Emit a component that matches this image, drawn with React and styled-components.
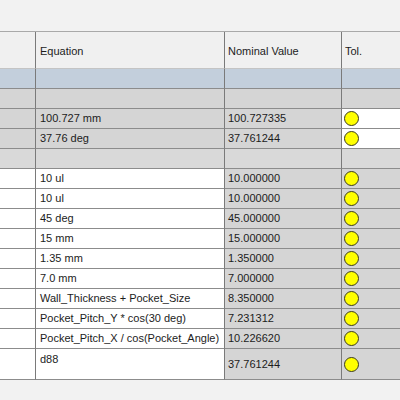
import React from 'react';
import styled, { createGlobalStyle } from 'styled-components';

const GlobalStyle = createGlobalStyle`
  html, body {
    margin: 0;
    padding: 0;
    background: #f2f2f2;
  }
  body {
    font-family: "Liberation Sans", Arial, sans-serif;
    font-size: 11px;
    color: #1c1c1c;
  }
`;

const Page = styled.div`
  width: 400px;
  height: 400px;
  overflow: hidden;
  background: #f2f2f2;
  padding-top: 31px;
  box-sizing: border-box;
`;

const Grid = styled.div`
  display: grid;
  grid-template-columns: 36px 189px 117px 1fr;
  border-top: 1px solid #a9a9a9;
`;

const bgFor = {
  header: '#f0f0f0',
  blue: '#c3cfdc',
  gray: '#d5d5d5',
  group: '#d9d9d9',
  white: '#ffffff',
};

const Cell = styled.div`
  box-sizing: border-box;
  height: ${(p) => p.$h || 20}px;
  background: ${(p) => bgFor[p.$bg] || '#ffffff'};
  border-right: 1px solid #7a7a7a;
  border-bottom: 1px solid ${(p) => (p.$light ? '#c4c4c4' : '#8c8c8c')};
  display: flex;
  align-items: ${(p) => (p.$top ? 'flex-start' : 'center')};
  padding: ${(p) => (p.$top ? '4px 3px 0 4px' : '0 3px 0 4px')};
  white-space: nowrap;
  overflow: hidden;
  line-height: 13px;

  &:nth-child(4n) {
    border-right: none;
  }
`;

const HeadCell = styled(Cell)`
  padding-top: 3px;
  padding-left: ${(p) => (p.$num ? 3 : 4)}px;
`;

const NumCell = styled(Cell)`
  padding-left: 3px;
`;

const TolCell = styled(Cell)`
  padding-left: 2px;
`;

const Dot = styled.span`
  display: inline-block;
  width: 13px;
  height: 13px;
  border-radius: 50%;
  background: #ffff00;
  border: 1px solid #3a3a20;
`;

const rows = [
  { kind: 'blue' },
  { kind: 'gray' },
  { eq: '100.727 mm', val: '100.727335', left: 'gray', eqBg: 'gray', tol: 'white' },
  { eq: '37.76 deg', val: '37.761244', left: 'gray', eqBg: 'gray', tol: 'white' },
  { kind: 'group' },
  { eq: '10 ul', val: '10.000000' },
  { eq: '10 ul', val: '10.000000' },
  { eq: '45 deg', val: '45.000000' },
  { eq: '15 mm', val: '15.000000' },
  { eq: '1.35 mm', val: '1.350000' },
  { eq: '7.0 mm', val: '7.000000' },
  { eq: 'Wall_Thickness + Pocket_Size', val: '8.350000' },
  { eq: 'Pocket_Pitch_Y * cos(30 deg)', val: '7.231312' },
  { eq: 'Pocket_Pitch_X / cos(Pocket_Angle)', val: '10.226620' },
  { eq: 'd88', val: '37.761244', tall: true },
];

const App = () => {
  return (
    <Page>
      <GlobalStyle />
      <Grid>
        <HeadCell $bg="header" $h={37} $light />
        <HeadCell $bg="header" $h={37} $light>Equation</HeadCell>
        <HeadCell $bg="header" $h={37} $light $num>Nominal Value</HeadCell>
        <HeadCell $bg="header" $h={37} $light $num>Tol.</HeadCell>

        {rows.map((r, i) => {
          if (r.kind) {
            return (
              <React.Fragment key={i}>
                <Cell $bg={r.kind} />
                <Cell $bg={r.kind} />
                <Cell $bg={r.kind} />
                <Cell $bg={r.kind} />
              </React.Fragment>
            );
          }
          const h = r.tall ? 31 : 20;
          return (
            <React.Fragment key={i}>
              <Cell $bg={r.left || 'white'} $h={h} />
              <Cell $bg={r.eqBg || 'white'} $h={h} $top={r.tall}>{r.eq}</Cell>
              <NumCell $bg="gray" $h={h}>{r.val}</NumCell>
              <TolCell $bg={r.tol || 'gray'} $h={h}><Dot /></TolCell>
            </React.Fragment>
          );
        })}
      </Grid>
    </Page>
  );
};

export default App;
